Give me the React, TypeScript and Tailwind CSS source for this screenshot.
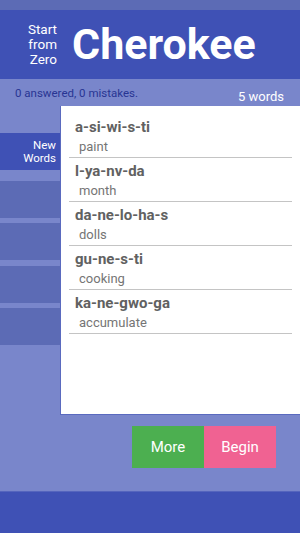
import React from "react";

const words = [
  { word: "a-si-wi-s-ti", meaning: "paint" },
  { word: "l-ya-nv-da", meaning: "month" },
  { word: "da-ne-lo-ha-s", meaning: "dolls" },
  { word: "gu-ne-s-ti", meaning: "cooking" },
  { word: "ka-ne-gwo-ga", meaning: "accumulate" },
];

export default function App() {
  return (
    <div className="flex h-[533px] w-[300px] flex-col overflow-hidden bg-[#7986cb] font-['Roboto',sans-serif]">
      {/* status bar */}
      <div className="h-[10px] shrink-0 bg-[#5c6bb5]" />

      {/* title */}
      <div className="flex h-[69px] shrink-0 items-center bg-[#3f51b5] text-white">
        <div className="w-[57px] text-right text-[13.5px] leading-[15px]">
          <div>Start</div>
          <div>from</div>
          <div>Zero</div>
        </div>
        <div className="ml-[15px] text-[43px] font-bold leading-none">Cherokee</div>
      </div>

      {/* progress */}
      <div className="relative h-[27px] shrink-0">
        <span className="absolute left-[15px] top-[7px] text-[11.5px] leading-[14px] text-[#283593]">
          0 answered, 0 mistakes.
        </span>
        <span className="absolute right-[16px] top-[10px] text-[13px] leading-[16px] text-white">5 words</span>
      </div>

      {/* body */}
      <div className="flex h-[309px] shrink-0">
        <div className="flex w-[60px] shrink-0 flex-col pt-[27px]">
          <div className="flex h-[37px] flex-col items-end justify-center bg-[#3f51b5] pr-[4px] text-right text-[11.5px] leading-[13px] text-white">
            <span>New</span>
            <span>Words</span>
          </div>
          <div className="mt-[11px] h-[37px] bg-[#5c6bb5]" />
          <div className="mt-[5px] h-[37px] bg-[#5c6bb5]" />
          <div className="mt-[6px] h-[37px] bg-[#5c6bb5]" />
          <div className="mt-[5px] h-[37px] bg-[#5c6bb5]" />
        </div>
        <div className="flex-1 border-b border-l border-[#5a6abf] bg-white px-[8px] pt-[8px]">
          {words.map((w) => (
            <div key={w.word} className="h-[44px] border-b border-[#c4c4c4]">
              <div className="pl-[6px] pt-[4px] text-[15px] font-bold leading-[18px] text-[#616161]">{w.word}</div>
              <div className="pl-[10px] pt-[3px] text-[13px] leading-[16px] text-[#757575]">{w.meaning}</div>
            </div>
          ))}
        </div>
      </div>

      {/* actions */}
      <div className="flex h-[76px] shrink-0 items-start justify-end pr-[24px] pt-[11px]">
        <button className="h-[42px] w-[72px] bg-[#4caf50] text-[15px] text-white">More</button>
        <button className="h-[42px] w-[72px] bg-[#f06292] text-[15px] text-white">Begin</button>
      </div>

      {/* nav bar */}
      <div className="flex-1 border-t border-[#5565bd] bg-[#3f51b5]" />
    </div>
  );
}
